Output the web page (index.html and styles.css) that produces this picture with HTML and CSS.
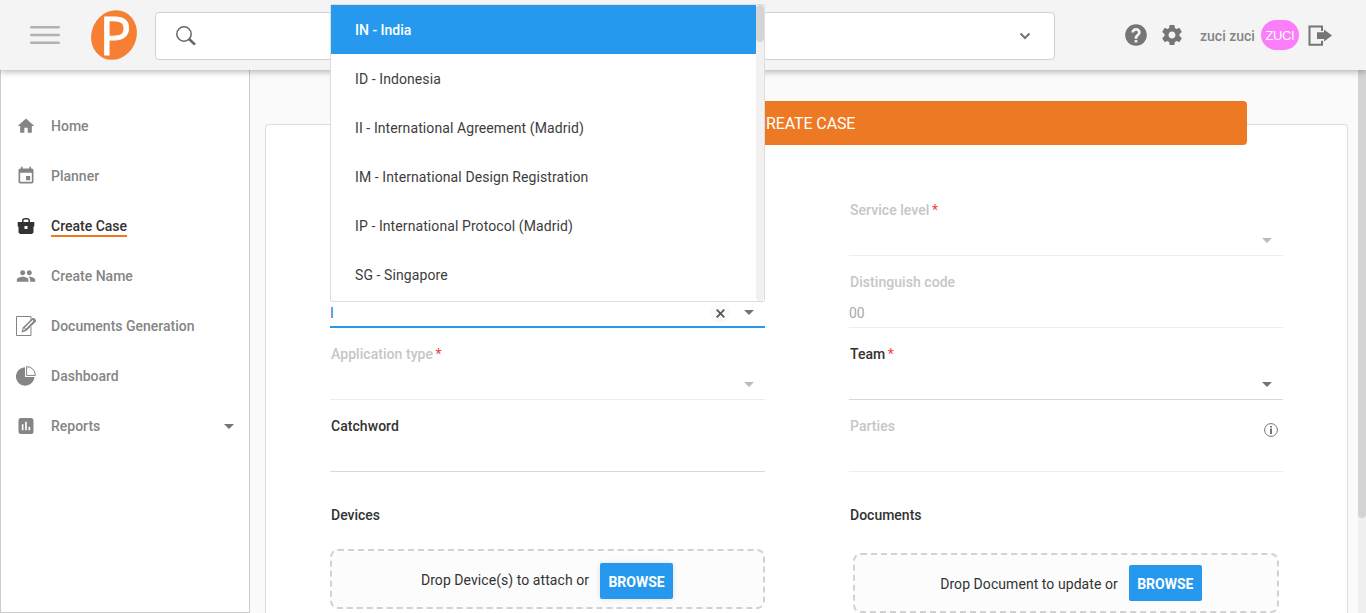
FILE: index.html
```html
<!DOCTYPE html>
<html lang="en">
<head>
<meta charset="utf-8">
<title>Create Case</title>
<link rel="stylesheet" href="styles.css">
</head>
<body>
<header class="topbar">
  <button class="menu-btn" aria-label="Menu"><svg width="30" height="20" viewBox="0 0 30 20" stroke="#b2b2b2" stroke-width="2.400" stroke-linecap="round"><path d="M1.200 2.300h27.600M1.200 10h27.600M1.200 17.700h27.600"/></svg></button>
  <svg class="logo" width="48" height="50" viewBox="0 0 48 50"><ellipse cx="24" cy="25" rx="22.4" ry="25.3" transform="rotate(25 24 25)" fill="#f67f33"/><text x="9.500" y="45" class="logo-letter">P</text></svg>
  <div class="search">
    <svg width="22" height="22" viewBox="0 0 22 22" fill="none" stroke="#666"><circle cx="9" cy="9" r="7.2" stroke-width="1.5"/><path d="M14 14l6 5.600" stroke-width="2.600"/></svg>
    <svg width="12" height="8" viewBox="0 0 12 8" fill="none" stroke="#757575" stroke-width="2"><path d="M1.500 1.500l4.500 4.500 4.500-4.500"/></svg>
  </div>
  <div class="account">
    <svg class="help" width="26" height="26" viewBox="0 0 24 24" fill="#757575"><path d="M12 2C6.480 2 2 6.480 2 12s4.480 10 10 10 10-4.480 10-10S17.520 2 12 2zm1.200 17h-2.400v-2.400h2.400V19zm2.300-7.300l-.9.9c-.8.8-1.300 1.400-1.300 2.900h-2.600V15c0-1.100.5-2.100 1.200-2.900l1.300-1.200c.4-.4.500-.8.500-1.200 0-1-.7-1.600-1.700-1.600s-1.700.7-1.700 1.700H7.700C7.700 7.300 9.600 5.500 12 5.500s4.300 1.700 4.300 3.900c0 .9-.3 1.700-.8 2.300z"/></svg>
    <svg class="gear" width="24" height="24" viewBox="0 0 24 24" fill="#757575"><path d="M19.430 12.980c.04-.32.070-.64.070-.98s-.03-.66-.07-.98l2.110-1.650c.19-.15.240-.42.120-.64l-2-3.460c-.12-.22-.39-.3-.61-.22l-2.490 1c-.52-.4-1.080-.73-1.690-.98l-.38-2.650C14.460 2.180 14.250 2 14 2h-4c-.25 0-.46.180-.49.420l-.38 2.650c-.61.250-1.170.59-1.690.98l-2.490-1c-.23-.09-.49 0-.61.220l-2 3.460c-.13.220-.07.490.120.640l2.110 1.650c-.04.320-.07.650-.07.980s.030.660.070.980l-2.110 1.650c-.19.150-.24.420-.12.640l2 3.460c.12.220.39.300.61.220l2.490-1c.52.400 1.080.730 1.690.980l.38 2.650c.03.240.24.420.49.420h4c.25 0 .46-.18.490-.42l.38-2.650c.61-.25 1.170-.59 1.690-.98l2.490 1c.23.090.49 0 .61-.22l2-3.460c.12-.22.070-.49-.12-.64l-2.110-1.650zM12 15.500c-1.930 0-3.500-1.570-3.500-3.500s1.570-3.500 3.500-3.500 3.500 1.570 3.500 3.500-1.570 3.500-3.500 3.500z"/></svg>
    <span class="user">zuci zuci</span>
    <span class="avatar">ZUCI</span>
    <svg class="exit" width="24" height="22" viewBox="0 0 24 22"><path d="M14 6V1.500H1.500v18.200H14v-4" fill="none" stroke="#757575" stroke-width="2"/><path d="M9 7.200h7V4.600l8 6-8 6v-2.600H9z" fill="#757575"/></svg>
  </div>
</header>
<div class="page">
  <nav class="sidebar">
    <a class="nav-item"><span class="nav-icon"><svg width="20" height="20" viewBox="0 0 24 24"><path d="M10 20v-6h4v6h5v-8h3L12 3 2 12h3v8z"/></svg></span><span>Home</span></a>
    <a class="nav-item"><span class="nav-icon"><svg width="20" height="20" viewBox="0 0 24 24"><path d="M17 12h-5v5h5v-5zM16 1v2H8V1H6v2H5c-1.110 0-1.990.9-1.990 2L3 19c0 1.100.89 2 2 2h14c1.100 0 2-.9 2-2V5c0-1.100-.9-2-2-2h-1V1h-2zm3 18H5V8h14v11z"/></svg></span><span>Planner</span></a>
    <a class="nav-item active"><span class="nav-icon"><svg width="18" height="18" viewBox="0 0 18 18"><path fill-rule="evenodd" d="M.7 5H5V3.700C5 2 6.300 1 8 1h2c1.700 0 3 1 3 2.700V5h4.300v4l-.8 1v5.500L15 17H3l-1.500-1.500V10l-.8-1zM6.500 5h5V4c0-1-.5-1.500-1.500-1.500H8C7 2.500 6.500 3 6.500 4zM7.500 9v3h3V9z"/></svg></span><span class="nav-text">Create Case</span></a>
    <a class="nav-item"><span class="nav-icon"><svg width="20" height="20" viewBox="0 0 24 24"><path d="M16 11c1.660 0 2.990-1.340 2.990-3S17.660 5 16 5s-3 1.340-3 3 1.340 3 3 3zm-8 0c1.660 0 2.990-1.340 2.990-3S9.660 5 8 5 5 6.340 5 8s1.340 3 3 3zm0 2c-2.330 0-7 1.170-7 3.500V19h14v-2.500c0-2.330-4.670-3.500-7-3.500zm8 0c-.29 0-.62.020-.97.050 1.160.84 1.970 1.970 1.970 3.450V19h6v-2.500c0-2.330-4.670-3.500-7-3.500z"/></svg></span><span>Create Name</span></a>
    <a class="nav-item"><span class="nav-icon"><svg width="20" height="20" viewBox="0 0 20 20"><path d="M15 5V.5H.5v19H15V11" fill="none" stroke="#858585"/><path fill-rule="evenodd" d="M5.500 16.500l1.200-5L16.500 2l1.500 0 2 2v1.500L10.300 15zM7 14.500l2.200-1L7.900 12zM8.800 11.700l1 1 7.700-7.700-1-1z"/></svg></span><span>Documents Generation</span></a>
    <a class="nav-item"><span class="nav-icon"><svg width="20" height="20" viewBox="0 0 20 20"><path d="M9 1.200V11h9.500A9.300 9.300 0 1 1 9 1.200z"/><path d="M10.600.6v8.800h8.800A8.800 8.800 0 0 0 10.600.6z" fill="#fff" stroke="#858585"/></svg></span><span>Dashboard</span></a>
    <a class="nav-item"><span class="nav-icon"><svg width="20" height="20" viewBox="0 0 24 24"><path d="M18 2.500H6a3 3 0 0 0-3 3v13a3 3 0 0 0 3 3h12a3 3 0 0 0 3-3v-13a3 3 0 0 0-3-3zM9 17H7v-7h2v7zm4 0h-2V7h2v10zm4 0h-2v-4h2v4z"/></svg></span><span>Reports</span><i class="arrow"></i></a>
  </nav>
  <main class="content">
    <section class="card">
      <h1 class="banner">CREATE CASE</h1>
      <div class="columns">
        <div class="column">
          <div class="field dim"></div>
          <div class="field focused"><div class="value"><span class="typed">I</span><span class="clear"><svg width="9" height="9" viewBox="0 0 9 9" stroke="#555" stroke-width="1.800"><path d="M.7.7l7.600 7.600M8.300.7L.7 8.300"/></svg></span><i class="arrow"></i></div></div>
          <div class="field dim"><label>Application type <b>*</b></label><div class="value"><i class="arrow"></i></div></div>
          <div class="field"><label>Catchword</label></div>
          <h2>Devices</h2>
          <div class="drop devices"><span>Drop Device(s) to attach or</span><button class="browse">BROWSE</button></div>
        </div>
        <div class="column">
          <div class="field dim"><label>Service level <b>*</b></label><div class="value"><i class="arrow"></i></div></div>
          <div class="field dim"><label>Distinguish code</label><div class="value"><span>00</span></div></div>
          <div class="field"><label>Team <b>*</b></label><div class="value"><i class="arrow"></i></div></div>
          <div class="field dim parties"><label>Parties</label><svg width="14" height="14" viewBox="0 0 14 14"><circle cx="7" cy="7" r="6.400" fill="none" stroke="#757575"/><path d="M6 3h2v1.600H6zM6 5.600h2V11H6z" fill="#757575"/></svg></div>
          <h2>Documents</h2>
          <div class="drop documents"><span>Drop Document to update or</span><button class="browse">BROWSE</button></div>
        </div>
      </div>
    </section>
  </main>
  <div class="scrollbar"><div class="thumb"></div></div>
</div>
<div class="options">
  <ul>
    <li class="selected">IN - India</li>
    <li>ID - Indonesia</li>
    <li>II - International Agreement (Madrid)</li>
    <li>IM - International Design Registration</li>
    <li>IP - International Protocol (Madrid)</li>
    <li>SG - Singapore</li>
  </ul>
  <div class="options-track"><div class="options-thumb"></div></div>
</div>
</body>
</html>
```
FILE: styles.css
```css
* { box-sizing: border-box; }
body { margin: 0; height: 613px; overflow: hidden; font: 14px/20px Roboto, sans-serif; color: #333; background: #fafafa; }
svg { display: block; flex: none; }
button { border: 0; padding: 0; font: inherit; }

.topbar { position: relative; z-index: 1; display: flex; align-items: center; height: 70px; padding-left: 30px; background: #f4f4f4; box-shadow: 0 1px 7px rgba(0,0,0,.35); }
.menu-btn { width: 30px; background: none; }
.logo { margin-left: 30px; overflow: visible; }
.logo-letter { font: 400 53px "Open Sans", sans-serif; fill: #fff; stroke: #fff; stroke-width: .8px; }
.search { display: flex; align-items: center; justify-content: space-between; width: 900px; height: 48px; margin: 2px 0 0 17px; padding: 0 23px 0 19px; border: 1px solid #d2d2d2; border-radius: 4px; background: #fff; }
.account { display: flex; align-items: center; margin-left: 68px; }
.gear { margin-left: 11px; }
.user { margin: 2px 6px 0 16px; font-weight: 500; color: #858585; white-space: nowrap; }
.avatar { width: 38px; height: 30px; border-radius: 15px; background: #fc7dfc; color: #fff; font: 13px/32px "Liberation Sans", sans-serif; letter-spacing: -.4px; text-align: center; }
.exit { margin: 2px 0 0 9px; }

.page { display: flex; height: 543px; }
.sidebar { width: 250px; padding-top: 31px; border: 1px solid #ccc; border-top: 0; background: #fff; }
.nav-item { display: flex; align-items: center; height: 50px; padding: 0 15px; font-weight: 500; color: #858585; }
.nav-icon { display: flex; justify-content: center; width: 20px; margin-right: 15px; fill: #858585; }
.nav-item.active { color: #333; }
.active .nav-icon { fill: #333; }
.nav-text { height: 21px; border-bottom: 2px solid #ed7924; }
.arrow { width: 0; height: 0; border: 5px solid transparent; border-top-color: #757575; border-bottom: 0; }
.nav-item .arrow { margin-left: auto; }

.content { flex: 1; padding: 54px 10px 0 15px; }
.card { height: 489px; border: 1px solid #ddd; border-bottom: 0; border-radius: 4px 4px 0 0; background: #fff; }
.banner { width: 881px; height: 44px; margin: -24px 0 0 100px; padding-right: 2px; border-radius: 4px; background: #ed7924; color: #fff; font: 400 16px/45px Roboto, sans-serif; letter-spacing: -.1px; text-align: center; }
.columns { display: grid; grid-template-columns: 435px 434px; column-gap: 84px; padding: 39px 0 0 64px; }
.field { display: flex; flex-direction: column; height: 72px; padding-top: 16px; border-bottom: 1px solid #d9d9d9; }
.field label { height: 20px; padding-left: 1px; font-weight: 500; letter-spacing: .05px; color: #333; }
.field b { margin-left: -1px; font-weight: 400; color: #f44336; }
.field .value { display: flex; align-items: center; height: 20px; margin-top: 11px; padding-right: 11px; color: #aaa; }
.value .arrow { margin: -2px 0 0 auto; }
.dim { border-color: #ececec; }
.dim label { color: #c6c6c6; }
.dim .arrow { border-top-color: #bcbcbc; }
.field.focused { padding-top: 36px; border-bottom: 2px solid #2699ee; }
.focused .typed { color: #1976d2; }
.focused .clear { display: grid; place-items: center; width: 20px; height: 20px; margin-left: auto; border-radius: 50%; background: #fafafa; }
.focused .arrow { margin-left: 14px; }
.field.parties { flex-direction: row; justify-content: space-between; padding-right: 5px; }
.parties svg { margin-top: 7px; }
h2 { height: 20px; margin: 33px 0 0 1px; font: 500 14px/20px Roboto, sans-serif; color: #333; }
.drop { display: flex; align-items: center; justify-content: center; height: 60px; border: 2px dashed #d2d2d2; border-radius: 8px; background: #fcfcfc; }
.drop span { padding-top: 2px; letter-spacing: .06px; }
.devices { margin-top: 24px; padding-right: 1px; }
.documents { margin: 28px 4px 0; padding-left: 10px; }
.browse { width: 73px; height: 36px; margin-left: 11px; padding-top: 2px; border-radius: 2px; background: #2699ee; color: #fff; font-weight: 700; }
.devices .browse { margin-top: 4px; box-shadow: 0 0 5px rgba(0,0,0,.12); }
.scrollbar { width: 8px; background: #f0f0f0; }
.thumb { height: 448px; border-radius: 0 0 4px 4px; background: #d4d4d4; }

/* Country list opens above its field, over the header and card. */
.options { position: absolute; z-index: 2; left: 330px; top: 4px; display: flex; width: 435px; height: 298px; border: 1px solid #ddd; border-radius: 2px; background: #fff; }
.options ul { flex: 1; margin: 0; padding: 0; list-style: none; }
.options li { height: 49px; padding-left: 24px; line-height: 51px; letter-spacing: .09px; color: #3d3d3d; }
.options .selected { background: #2699ee; color: #fff; font-weight: 500; letter-spacing: 0; }
.options-track { width: 8px; border-radius: 4px; background: #f1f1f1; }
.options-thumb { height: 37px; border-radius: 4px; background: #d4d4d4; }
```
